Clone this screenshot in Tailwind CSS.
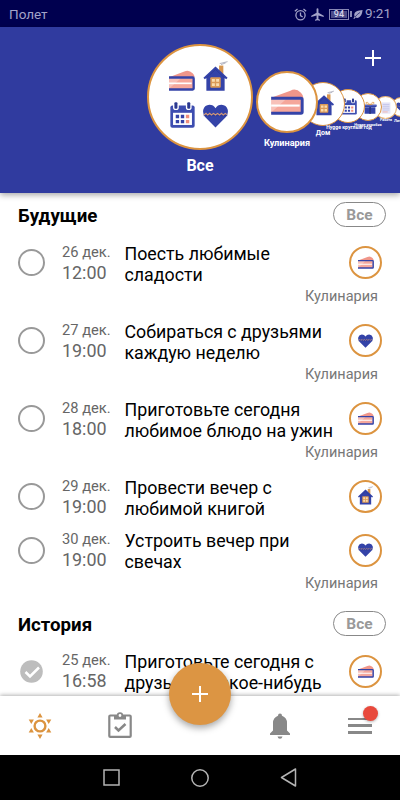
<!DOCTYPE html>
<html lang="ru">
<head>
    <meta charset="UTF-8">
    <meta name="viewport" content="width=device-width, initial-scale=1.0">
    <title>Будущие</title>
    <script src="https://cdn.jsdelivr.net/npm/@tailwindcss/browser@4"></script>
</head>
<body class="bg-white font-['Roboto','Noto_Sans',sans-serif]">
    <!-- shared icons -->
    <svg class="hidden">
        <symbol id="cake" viewBox="0 0 78 62">
            <path d="M0 21L46 4Q59 -3 71 9Q76 14 77 21z" fill="#f0968a"/>
            <path d="M0 24H72V58H0z" fill="#f5a79b"/>
            <path d="M0 37H68V42H0z" fill="#fff"/>
            <path d="M0 56L38 22H0z" fill="#fff" opacity=".3"/>
            <path d="M0 22H71Q74 22 74 25V55Q74 58 71 58H0" fill="none" stroke="#3443a8" stroke-width="7"/>
        </symbol>
        <symbol id="house" viewBox="0 0 74 92">
            <path d="M48 14H61V42H48z" fill="#d6954e"/>
            <path d="M50 8L74 2M54 11L68 6" stroke="#8a8ca0" stroke-width="2" fill="none"/>
            <path d="M37 17L74 51L70 56L65 52V91H9V52L4 56L0 51z" fill="#3443a8"/>
            <path d="M9 52L37 26L65 52" fill="none" stroke="#26348f" stroke-width="2"/>
            <rect x="21" y="50" width="32" height="32" rx="3" fill="#dc9a56"/>
            <path d="M26 55h9v9h-9zM39 55h9v9h-9zM26 68h9v9h-9zM39 68h9v9h-9z" fill="#fbdcae"/>
        </symbol>
        <symbol id="calendar" viewBox="0 0 74 77">
            <rect x="1" y="10" width="72" height="66" rx="6" fill="#3d4db0"/>
            <rect x="9" y="32" width="56" height="36" fill="#fff"/>
            <path d="M9 0h17v17q0 7-8.500 7t-8.500-7zM47 0h17v17q0 7-8.500 7t-8.500-7z" fill="#fff"/>
            <rect x="13" y="1" width="9" height="19" rx="3" fill="#2b3990"/>
            <rect x="51" y="1" width="9" height="19" rx="3" fill="#2b3990"/>
            <path d="M17 38h10v10h-10zM32 38h10v10h-10zM17 53h10v10h-10zM32 53h10v10h-10z" fill="#3443a8"/>
            <path d="M47 38h10v10h-10zM47 53h10v10h-10z" fill="#ef8e7c"/>
        </symbol>
        <symbol id="heart" viewBox="0 0 74 70">
            <path d="M37 69L7 39Q-2 29 1 16Q5 3 19 2Q31 2 37 12Q43 2 55 2Q69 3 73 16Q76 29 67 39z" fill="#3443a8"/>
            <path d="M2 34H72" stroke="#2a3590" stroke-width="2"/>
            <path d="M3 32l6-5 5 5 6-5 5 5 6-5 6 5 6-5 6 5 6-5 5 5 6-5 5 4" fill="none" stroke="#d89a72" stroke-width="3"/>
        </symbol>
        <symbol id="gift" viewBox="0 0 74 70">
            <path d="M2 20H72V32H2zM8 34H66V68H8z" fill="#3443a8"/>
            <path d="M2 20H72V27H2z" fill="#5261bd"/>
            <path d="M37 20Q22 0 16 8T37 20Q52 0 58 8T37 20" fill="none" stroke="#dc9440" stroke-width="4"/>
            <path d="M33 32h9v36h-9z" fill="#28337f"/>
        </symbol>
        <symbol id="note" viewBox="0 0 60 70">
            <path d="M4 2H56V68H4z" fill="#e6e6f8"/>
            <path d="M10 14H50M10 25H50M10 36H50M10 47H50" stroke="#a4a9de" stroke-width="3"/>
            <path d="M10 58H40" stroke="#f0a090" stroke-width="4"/>
        </symbol>
    </svg>

    <div class="relative w-[400px] h-[800px] overflow-hidden flex flex-col">
        <!-- status bar -->
        <div class="h-[27px] shrink-0 bg-[#00004f] text-[#a3a3c8] flex items-center pl-[9px] pr-[9px] pt-px">
            <span class="text-[13.5px]">Полет</span>
            <svg class="ml-auto w-[13px] h-[13px]" viewBox="0 0 24 24" fill="none" stroke="currentColor" stroke-width="2.4">
                <circle cx="12" cy="13.5" r="8.5"/>
                <path d="M12 8.500v5.500l4 2.500M1.500 6l5-4M22.500 6l-5-4"/>
            </svg>
            <svg class="ml-[3px] w-[15px] h-[15px]" viewBox="0 0 24 24" fill="currentColor">
                <path d="M22 16v-2l-8.500-5V3.500a1.500 1.500 0 0 0-3 0V9L2 14v2l8.500-2.500V19L8 20.500V22l4-1 4 1v-1.500L13.500 19v-5.500z"/>
            </svg>
            <div class="ml-[4px] w-[20px] h-[11px] border border-[#8787b4] p-px">
                <div class="h-full bg-[#4c4c88] text-[9px] leading-[7px] font-medium text-center text-[#d5d5ea]">94</div>
            </div>
            <div class="w-[2px] h-[6px] bg-[#8787b4] ml-px"></div>
            <svg class="ml-px w-[10px] h-[11px]" viewBox="0 0 24 24" fill="currentColor">
                <path d="M23 1C12 2 4 4 3 12q0 3 1 5l-3 5 2 1 3-4q6 3 11-2C22 12 22 6 23 1z"/>
                <path d="M5 18Q10 11 17 7" stroke="#00004f" stroke-width="1.500" fill="none"/>
            </svg>
            <span class="ml-[2px] text-[13.500px] leading-none">9:21</span>
        </div>

        <!-- category carousel -->
        <div class="relative z-10 h-[166px] shrink-0 bg-[#303b9f] shadow-[0_2px_6px_rgba(0,0,0,0.35)] text-white font-bold">
            <svg class="absolute left-[365px] top-[23px] w-4 h-4" viewBox="0 0 16 16" stroke="#fff" stroke-width="2"><path d="M8 0v16M0 8h16"/></svg>

            <div class="absolute inset-0 overflow-hidden">
                <div class="absolute left-[391px] top-[70px] w-[20px] h-[20px] rounded-full bg-white border border-[#dc9440] flex items-center justify-center"><svg class="w-[10px] h-[10px]"><use href="#heart"/></svg></div>
                <div class="absolute left-[374px] top-[69px] w-[23px] h-[23px] rounded-full bg-white border border-[#dc9440]/70 flex items-center justify-center"><svg class="w-[12px] h-[12px]"><use href="#note"/></svg></div>
                <div class="absolute left-[354px] top-[66px] w-[28px] h-[28px] rounded-full bg-white border border-[#dc9440] flex items-center justify-center"><svg class="w-[14px] h-[13px] ml-[4px]"><use href="#gift"/></svg></div>
                <div class="absolute left-[331px] top-[62px] w-[34px] h-[34px] rounded-full bg-white border border-[#dc9440] flex items-center justify-center"><svg class="w-[16px] h-[17px] ml-[2px]"><use href="#calendar"/></svg></div>
                <div class="absolute left-[301px] top-[55px] w-[44px] h-[44px] rounded-full bg-white border-[1.5px] border-[#dc9440] flex items-center justify-center"><svg class="w-[20px] h-[26px] ml-[2px] -mt-[2px]"><use href="#house"/></svg></div>
                <div class="absolute left-[256px] top-[44px] w-[62px] h-[62px] rounded-full bg-white border-2 border-[#dc9440] flex items-center justify-center"><svg class="w-[33px] h-[26px]"><use href="#cake"/></svg></div>

                <div class="absolute left-[394px] top-[91px] text-[4px] leading-[5px]">Лич</div>
                <div class="absolute left-[376px] top-[91px] w-[20px] text-center text-[3.6px] leading-[5px]">Работа</div>
                <div class="absolute left-[345px] top-[95px] w-[46px] text-center text-[3.9px] leading-[5px] whitespace-nowrap">Hygge коробка</div>
                <div class="absolute left-[319px] top-[97px] w-[60px] text-center text-[5.1px] leading-[7px] whitespace-nowrap">Hygge круглый год</div>
                <div class="absolute left-[303px] top-[102px] w-[40px] text-center text-[7px] leading-[9px]">Дом</div>
                <div class="absolute left-[257px] top-[110px] w-[60px] text-center text-[9.2px] leading-[12px]">Кулинария</div>
            </div>

            <div class="absolute left-[147px] top-[17px] w-[106px] h-[106px] rounded-full bg-white border-[2.5px] border-[#dc9440] grid grid-cols-[26px_25px] grid-rows-[30px_25px] gap-x-[8px] gap-y-[12px] justify-center content-center items-end pb-[6px] pr-[3px]">
                <svg class="w-[26px] h-[21px]"><use href="#cake"/></svg>
                <svg class="w-[25px] h-[30px]"><use href="#house"/></svg>
                <svg class="w-[25px] h-[26px] ml-px"><use href="#calendar"/></svg>
                <svg class="w-[25px] h-[24px]"><use href="#heart"/></svg>
            </div>
            <div class="absolute left-[150px] top-[129px] w-[100px] text-center text-[16px] leading-5">Все</div>
        </div>

        <!-- task list -->
        <div class="h-[503px] shrink-0 overflow-hidden text-black">
            <div class="h-[43px] pl-[18px] pr-[14px] flex items-center justify-between">
                <h2 class="text-[18.7px] font-bold pt-[3px]">Будущие</h2>
                <span class="w-[53px] h-[25px] rounded-full border border-[#888] text-[#999] text-[15.500px] leading-[25px] font-bold text-center">Все</span>
            </div>
            <div id="upcoming"></div>
            <div class="h-[43px] pl-[18px] pr-[14px] flex items-center justify-between">
                <h2 class="text-[18.7px] font-bold pt-[3px]">История</h2>
                <span class="w-[53px] h-[25px] rounded-full border border-[#888] text-[#999] text-[15.500px] leading-[25px] font-bold text-center">Все</span>
            </div>
            <div id="history"></div>
        </div>

        <!-- bottom bar -->
        <div class="relative h-[59px] shrink-0 bg-white shadow-[0_-1px_4px_rgba(0,0,0,0.3)] grid grid-cols-5 items-center justify-items-center">
            <svg class="w-[26px] h-[26px]" viewBox="0 0 26 26" fill="#dc9440">
                <circle cx="13" cy="13" r="5.400" fill="none" stroke="#dc9440" stroke-width="2.400"/>
                <path d="M13 0l2.600 4.500h-5.200zM13 26l2.600-4.500h-5.200zM1.700 6.500h5.200L4.300 11zM24.300 6.500h-5.200l2.600 4.500zM1.700 19.500h5.200L4.300 15zM24.300 19.500h-5.200l2.600-4.500z"/>
            </svg>
            <svg class="w-[24px] h-[26px] -mt-px" viewBox="0 0 24 26" fill="none" stroke="#888" stroke-width="2.200">
                <rect x="1.300" y="3.500" width="21.400" height="21.400" rx="1"/>
                <path d="M6 3.500h12v4H6z" fill="#888" stroke="none"/>
                <circle cx="12" cy="3.500" r="2.300" stroke-width="1.800" fill="#fff"/>
                <path d="M7 15l3.500 3.500L17.500 12" stroke-width="2.500"/>
            </svg>
            <div class="absolute left-[169px] -top-[33px] w-[62px] h-[62px] rounded-full bg-[#dc9543] shadow-[0_3px_7px_rgba(0,0,0,0.35)] flex items-center justify-center">
                <svg class="w-4 h-4" viewBox="0 0 16 16" stroke="#fff" stroke-width="2"><path d="M8 0v16M0 8h16"/></svg>
            </div>
            <svg class="col-start-4 w-[22px] h-[26px]" viewBox="0 0 22 26" fill="#888">
                <path d="M11 0.500q2 0 2 2.200Q18 4.500 18 10v7.500l3 3V22H1v-1.500l3-3V10Q4 4.500 9 2.700Q9 .5 11 .5zM8.500 23.500h5q-.5 2.300-2.500 2.300t-2.500-2.300z"/>
            </svg>
            <div class="relative w-[24px] h-[16px] flex flex-col justify-between">
                <div class="h-[2.500px] bg-[#888]"></div>
                <div class="h-[2.500px] bg-[#888]"></div>
                <div class="h-[2.500px] bg-[#888]"></div>
                <div class="absolute left-[15px] -top-[12px] w-[15px] h-[15px] rounded-full bg-[#e8493c] shadow-[0_1px_3px_rgba(0,0,0,0.3)]"></div>
            </div>
        </div>

        <!-- system navigation -->
        <div class="relative grow bg-black flex items-center justify-center gap-[71px]">
            <svg class="w-[17px] h-[17px]" viewBox="0 0 17 17" fill="none" stroke="#b4b4b4" stroke-width="1.500"><path d="M1 1h15v15H1z"/></svg>
            <svg class="w-[18px] h-[18px]" viewBox="0 0 18 18" fill="none" stroke="#b4b4b4" stroke-width="1.500"><circle cx="9" cy="9" r="8.200"/></svg>
            <svg class="w-[17px] h-[19px]" viewBox="0 0 17 19" fill="none" stroke="#b4b4b4" stroke-width="1.500" stroke-linejoin="round"><path d="M1.500 9.500L15.500 1v17z"/></svg>
        </div>
    </div>

    <script>
        const upcoming = [
            { date: '26 дек.', time: '12:00', title: 'Поесть любимые<br>сладости', icon: 'cake', category: 'Кулинария' },
            { date: '27 дек.', time: '19:00', title: 'Собираться с друзьями<br>каждую неделю', icon: 'heart', category: 'Кулинария' },
            { date: '28 дек.', time: '18:00', title: 'Приготовьте сегодня<br>любимое блюдо на ужин', icon: 'cake', category: 'Кулинария' },
            { date: '29 дек.', time: '19:00', title: 'Провести вечер с<br>любимой книгой', icon: 'house' },
            { date: '30 дек.', time: '19:00', title: 'Устроить вечер при<br>свечах', icon: 'heart', category: 'Кулинария' }
        ];
        const history = [
            { date: '25 дек.', time: '16:58', title: 'Приготовьте сегодня с<br>друзьями какое-нибудь', icon: 'cake', done: true }
        ];

        const sizes = {
            cake: 'w-[16px] h-[13px]',
            heart: 'w-[15px] h-[14px]',
            house: 'w-[15px] h-[19px] -mt-[3px]'
        };

        const check = (done) => done
            ? `<svg class="w-[27px] h-[27px]" viewBox="0 0 27 27"><circle cx="13.500" cy="13.500" r="11.300" fill="#bdbdbd"/><path d="M7.500 14l4.500 4.500L21 9.500" fill="none" stroke="#fff" stroke-width="2.500"/></svg>`
            : `<div class="w-[27px] h-[27px] rounded-full border-2 border-[#999]"></div>`;

        const row = (t) => `
            <div>
                <div class="h-[53.700px] pl-[18px] pr-[18px] flex items-center">
                    ${check(t.done)}
                    <div class="ml-[17px] w-[62.500px] text-[#666]">
                        <div class="text-[14.700px] leading-[20px]">${t.date}</div>
                        <div class="text-[17.900px] leading-[22px]">${t.time}</div>
                    </div>
                    <div class="grow text-[17.800px] leading-[21px] whitespace-nowrap pt-[2px]">${t.title}</div>
                    <div class="shrink-0 w-[33px] h-[33px] rounded-full border-2 border-[#dc9440] flex items-center justify-center">
                        <svg class="${sizes[t.icon]}"><use href="#${t.icon}"/></svg>
                    </div>
                </div>
                ${t.category ? `<div class="h-[24.300px] pr-[22px] text-right text-[14.500px] leading-[14px] text-[#777]">${t.category}</div>` : ''}
            </div>`;

        document.getElementById('upcoming').innerHTML = upcoming.map(row).join('');
        document.getElementById('history').innerHTML = history.map(row).join('');
    </script>
</body>
</html>
